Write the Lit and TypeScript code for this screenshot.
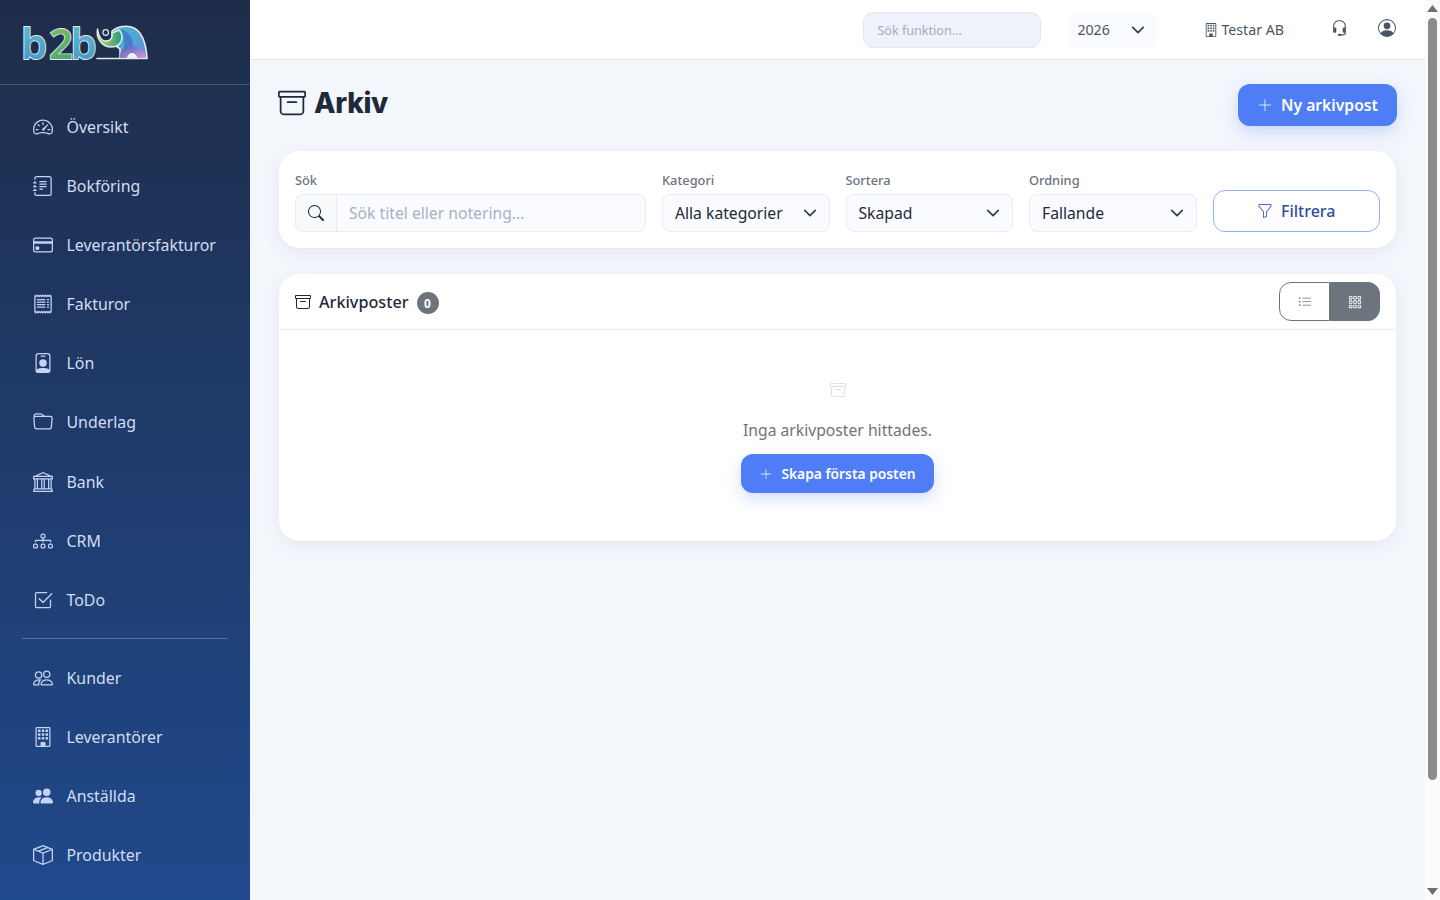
import { LitElement, html, css, svg } from "lit";
import { customElement } from "lit/decorators.js";

const ICONS: Record<string, any> = {
  speedometer: svg`<path d="M8 4a.5.5 0 0 1 .5.5V6a.5.5 0 0 1-1 0V4.5A.5.5 0 0 1 8 4M3.732 5.732a.5.5 0 0 1 .707 0l.915.914a.5.5 0 1 1-.708.708l-.914-.915a.5.5 0 0 1 0-.707M2 10a.5.5 0 0 1 .5-.5h1.586a.5.5 0 0 1 0 1H2.5A.5.5 0 0 1 2 10m9.5 0a.5.5 0 0 1 .5-.5h1.5a.5.5 0 0 1 0 1H12a.5.5 0 0 1-.5-.5m.754-4.246a.39.39 0 0 0-.527-.02L7.547 9.31a.91.91 0 1 0 1.302 1.258l3.434-4.297a.39.39 0 0 0-.029-.518z"/><path fill-rule="evenodd" d="M0 10a8 8 0 1 1 15.547 2.661c-.442 1.253-1.845 1.602-2.932 1.25C11.309 13.488 9.475 13 8 13c-1.474 0-3.31.488-4.615.911-1.087.352-2.49.003-2.932-1.25A8 8 0 0 1 0 10m8-7a7 7 0 0 0-6.603 9.329c.203.575.923.876 1.68.63C4.397 12.533 6.358 12 8 12s3.604.532 4.923.96c.757.245 1.477-.056 1.68-.631A7 7 0 0 0 8 3"/>`,
  journal: svg`<path d="M5 10.5a.5.5 0 0 1 .5-.5h2a.5.5 0 0 1 0 1h-2a.5.5 0 0 1-.5-.5m0-2a.5.5 0 0 1 .5-.5h5a.5.5 0 0 1 0 1h-5a.5.5 0 0 1-.5-.5m0-2a.5.5 0 0 1 .5-.5h5a.5.5 0 0 1 0 1h-5a.5.5 0 0 1-.5-.5m0-2a.5.5 0 0 1 .5-.5h5a.5.5 0 0 1 0 1h-5a.5.5 0 0 1-.5-.5"/><path d="M3 0h10a2 2 0 0 1 2 2v12a2 2 0 0 1-2 2H3a2 2 0 0 1-2-2v-1h1v1a1 1 0 0 0 1 1h10a1 1 0 0 0 1-1V2a1 1 0 0 0-1-1H3a1 1 0 0 0-1 1v1H1V2a2 2 0 0 1 2-2"/><path d="M1 5v-.5a.5.5 0 0 1 1 0V5h.5a.5.5 0 0 1 0 1h-2a.5.5 0 0 1 0-1zm0 3v-.5a.5.5 0 0 1 1 0V8h.5a.5.5 0 0 1 0 1h-2a.5.5 0 0 1 0-1zm0 3v-.5a.5.5 0 0 1 1 0v.5h.5a.5.5 0 0 1 0 1h-2a.5.5 0 0 1 0-1z"/>`,
  card: svg`<path d="M0 4a2 2 0 0 1 2-2h12a2 2 0 0 1 2 2v8a2 2 0 0 1-2 2H2a2 2 0 0 1-2-2zm2-1a1 1 0 0 0-1 1v1h14V4a1 1 0 0 0-1-1zm13 4H1v5a1 1 0 0 0 1 1h12a1 1 0 0 0 1-1z"/><path d="M2 10a1 1 0 0 1 1-1h1a1 1 0 0 1 1 1v1a1 1 0 0 1-1 1H3a1 1 0 0 1-1-1z"/>`,
  receipt: svg`<path d="M1.92.506a.5.5 0 0 1 .434.14L3 1.293l.646-.647a.5.5 0 0 1 .708 0L5 1.293l.646-.647a.5.5 0 0 1 .708 0L7 1.293l.646-.647a.5.5 0 0 1 .708 0L9 1.293l.646-.647a.5.5 0 0 1 .708 0l.646.647.646-.647a.5.5 0 0 1 .708 0l.646.647.646-.647a.5.5 0 0 1 .801.13l.5 1A.5.5 0 0 1 15 2v12a.5.5 0 0 1-.053.224l-.5 1a.5.5 0 0 1-.8.13L13 14.707l-.646.647a.5.5 0 0 1-.708 0L11 14.707l-.646.647a.5.5 0 0 1-.708 0L9 14.707l-.646.647a.5.5 0 0 1-.708 0L7 14.707l-.646.647a.5.5 0 0 1-.708 0L5 14.707l-.646.647a.5.5 0 0 1-.708 0L3 14.707l-.646.647a.5.5 0 0 1-.801-.13l-.5-1A.5.5 0 0 1 1 14V2a.5.5 0 0 1 .053-.224l.5-1a.5.5 0 0 1 .367-.27m.217 1.338L2 2.118v11.764l.137.274.51-.51a.5.5 0 0 1 .707 0l.646.647.646-.646a.5.5 0 0 1 .708 0l.646.646.646-.646a.5.5 0 0 1 .708 0l.646.646.646-.646a.5.5 0 0 1 .708 0l.646.646.646-.646a.5.5 0 0 1 .708 0l.646.646.646-.646a.5.5 0 0 1 .708 0l.509.509.137-.274V2.118l-.137-.274-.51.51a.5.5 0 0 1-.707 0L12 1.707l-.646.647a.5.5 0 0 1-.708 0L10 1.707l-.646.647a.5.5 0 0 1-.708 0L8 1.707l-.646.647a.5.5 0 0 1-.708 0L6 1.707l-.646.647a.5.5 0 0 1-.708 0L4 1.707l-.646.647a.5.5 0 0 1-.708 0z"/><path d="M3 4.5a.5.5 0 0 1 .5-.5h6a.5.5 0 1 1 0 1h-6a.5.5 0 0 1-.5-.5m0 2a.5.5 0 0 1 .5-.5h6a.5.5 0 1 1 0 1h-6a.5.5 0 0 1-.5-.5m0 2a.5.5 0 0 1 .5-.5h6a.5.5 0 1 1 0 1h-6a.5.5 0 0 1-.5-.5m0 2a.5.5 0 0 1 .5-.5h6a.5.5 0 0 1 0 1h-6a.5.5 0 0 1-.5-.5m8-6a.5.5 0 0 1 .5-.5h1a.5.5 0 0 1 0 1h-1a.5.5 0 0 1-.5-.5m0 2a.5.5 0 0 1 .5-.5h1a.5.5 0 0 1 0 1h-1a.5.5 0 0 1-.5-.5m0 2a.5.5 0 0 1 .5-.5h1a.5.5 0 0 1 0 1h-1a.5.5 0 0 1-.5-.5m0 2a.5.5 0 0 1 .5-.5h1a.5.5 0 0 1 0 1h-1a.5.5 0 0 1-.5-.5"/>`,
  badge: svg`<path d="M6.5 2a.5.5 0 0 0 0 1h3a.5.5 0 0 0 0-1zM11 8a3 3 0 1 1-6 0 3 3 0 0 1 6 0"/><path d="M4.5 0A2.5 2.5 0 0 0 2 2.5V14a2 2 0 0 0 2 2h8a2 2 0 0 0 2-2V2.5A2.5 2.5 0 0 0 11.5 0zM3 2.5A1.5 1.5 0 0 1 4.5 1h7A1.5 1.5 0 0 1 13 2.5v10.795a4.2 4.2 0 0 0-.776-.492C11.392 12.387 10.063 12 8 12s-3.392.387-4.224.803a4.2 4.2 0 0 0-.776.492z"/>`,
  folder: svg`<path d="M.54 3.87.5 3a2 2 0 0 1 2-2h3.672a2 2 0 0 1 1.414.586l.828.828A2 2 0 0 0 9.828 3h3.982a2 2 0 0 1 1.992 2.181l-.637 7A2 2 0 0 1 13.174 14H2.826a2 2 0 0 1-1.991-1.819l-.637-7a2 2 0 0 1 .342-1.31zM2.19 4a1 1 0 0 0-.996 1.09l.637 7a1 1 0 0 0 .995.91h10.348a1 1 0 0 0 .995-.91l.637-7A1 1 0 0 0 13.81 4zm4.69-1.707A1 1 0 0 0 6.172 2H2.5a1 1 0 0 0-1 .981l.006.139q.323-.119.684-.12h5.396z"/>`,
  bank: svg`<path d="m8 0 6.61 3h.89a.5.5 0 0 1 .5.5v2a.5.5 0 0 1-.5.5H15v7a.5.5 0 0 1 .485.38l.5 2a.498.498 0 0 1-.485.62H.5a.498.498 0 0 1-.485-.62l.5-2A.5.5 0 0 1 1 13V6H.5a.5.5 0 0 1-.5-.5v-2A.5.5 0 0 1 .5 3h.89zM3.777 3h8.447L8 1zM2 6v7h1V6zm2 0v7h2.5V6zm3.5 0v7h1V6zm2 0v7H12V6zM13 6v7h1V6zm2-1V4H1v1zm-.39 9H1.39l-.25 1h13.72z"/>`,
  diagram: svg`<path fill-rule="evenodd" d="M6 3.5A1.5 1.5 0 0 1 7.5 2h1A1.5 1.5 0 0 1 10 3.5v1A1.5 1.5 0 0 1 8.5 6v1H14a.5.5 0 0 1 .5.5v1a.5.5 0 0 1-1 0V8h-5v.5a.5.5 0 0 1-1 0V8h-5v.5a.5.5 0 0 1-1 0v-1A.5.5 0 0 1 2 7h5.5V6A1.5 1.5 0 0 1 6 4.5zM8.5 5a.5.5 0 0 0 .5-.5v-1a.5.5 0 0 0-.5-.5h-1a.5.5 0 0 0-.5.5v1a.5.5 0 0 0 .5.5zM0 11.5A1.5 1.5 0 0 1 1.5 10h1A1.5 1.5 0 0 1 4 11.5v1A1.5 1.5 0 0 1 2.5 14h-1A1.5 1.5 0 0 1 0 12.5zm1.5-.5a.5.5 0 0 0-.5.5v1a.5.5 0 0 0 .5.5h1a.5.5 0 0 0 .5-.5v-1a.5.5 0 0 0-.5-.5zm4.5.5A1.5 1.5 0 0 1 7.5 10h1a1.5 1.5 0 0 1 1.5 1.5v1A1.5 1.5 0 0 1 8.5 14h-1A1.5 1.5 0 0 1 6 12.5zm1.5-.5a.5.5 0 0 0-.5.5v1a.5.5 0 0 0 .5.5h1a.5.5 0 0 0 .5-.5v-1a.5.5 0 0 0-.5-.5zm4.5.5a1.5 1.5 0 0 1 1.5-1.5h1a1.5 1.5 0 0 1 1.5 1.5v1a1.5 1.5 0 0 1-1.5 1.5h-1a1.5 1.5 0 0 1-1.5-1.5zm1.5-.5a.5.5 0 0 0-.5.5v1a.5.5 0 0 0 .5.5h1a.5.5 0 0 0 .5-.5v-1a.5.5 0 0 0-.5-.5z"/>`,
  check: svg`<path d="M3 14.5A1.5 1.5 0 0 1 1.5 13V3A1.5 1.5 0 0 1 3 1.5h8a.5.5 0 0 1 0 1H3a.5.5 0 0 0-.5.5v10a.5.5 0 0 0 .5.5h10a.5.5 0 0 0 .5-.5V8a.5.5 0 0 1 1 0v5a1.5 1.5 0 0 1-1.5 1.5z"/><path d="m8.354 10.354 7-7a.5.5 0 0 0-.708-.708L8 9.293 5.354 6.646a.5.5 0 1 0-.708.708l3 3a.5.5 0 0 0 .708 0"/>`,
  people: svg`<path d="M15 14s1 0 1-1-1-4-5-4-5 3-5 4 1 1 1 1zm-7.978-1L7 12.996c.001-.264.167-1.03.76-1.72C8.312 10.629 9.282 10 11 10c1.717 0 2.687.63 3.24 1.276.593.69.758 1.457.76 1.72l-.008.002-.014.002zM11 7a2 2 0 1 0 0-4 2 2 0 0 0 0 4m3-2a3 3 0 1 1-6 0 3 3 0 0 1 6 0M6.936 9.28a6 6 0 0 0-1.23-.247A7 7 0 0 0 5 9c-4 0-5 3-5 4q0 1 1 1h4.216A2.24 2.24 0 0 1 5 13c0-1.01.377-2.042 1.09-2.904.243-.294.526-.569.846-.816M4.92 10A5.5 5.5 0 0 0 4 13H1c0-.26.164-1.03.76-1.724.545-.636 1.492-1.256 3.16-1.275ZM1.5 5.5a3 3 0 1 1 6 0 3 3 0 0 1-6 0m3-2a2 2 0 1 0 0 4 2 2 0 0 0 0-4"/>`,
  building: svg`<path d="M4 2.5a.5.5 0 0 1 .5-.5h1a.5.5 0 0 1 .5.5v1a.5.5 0 0 1-.5.5h-1a.5.5 0 0 1-.5-.5zm3 0a.5.5 0 0 1 .5-.5h1a.5.5 0 0 1 .5.5v1a.5.5 0 0 1-.5.5h-1a.5.5 0 0 1-.5-.5zm3.5-.5a.5.5 0 0 0-.5.5v1a.5.5 0 0 0 .5.5h1a.5.5 0 0 0 .5-.5v-1a.5.5 0 0 0-.5-.5zM4 5.5a.5.5 0 0 1 .5-.5h1a.5.5 0 0 1 .5.5v1a.5.5 0 0 1-.5.5h-1a.5.5 0 0 1-.5-.5zM7.5 5a.5.5 0 0 0-.5.5v1a.5.5 0 0 0 .5.5h1a.5.5 0 0 0 .5-.5v-1a.5.5 0 0 0-.5-.5zm2.5.5a.5.5 0 0 1 .5-.5h1a.5.5 0 0 1 .5.5v1a.5.5 0 0 1-.5.5h-1a.5.5 0 0 1-.5-.5zM4.5 8a.5.5 0 0 0-.5.5v1a.5.5 0 0 0 .5.5h1a.5.5 0 0 0 .5-.5v-1a.5.5 0 0 0-.5-.5zm2.5.5a.5.5 0 0 1 .5-.5h1a.5.5 0 0 1 .5.5v1a.5.5 0 0 1-.5.5h-1a.5.5 0 0 1-.5-.5zm3.5-.5a.5.5 0 0 0-.5.5v1a.5.5 0 0 0 .5.5h1a.5.5 0 0 0 .5-.5v-1a.5.5 0 0 0-.5-.5z"/><path d="M2 1a1 1 0 0 1 1-1h10a1 1 0 0 1 1 1v14a1 1 0 0 1-1 1H3a1 1 0 0 1-1-1zm11 0H3v14h3v-2.5a.5.5 0 0 1 .5-.5h3a.5.5 0 0 1 .5.5V15h3z"/>`,
  peopleFill: svg`<path d="M7 14s-1 0-1-1 1-4 5-4 5 3 5 4-1 1-1 1zm4-6a3 3 0 1 0 0-6 3 3 0 0 0 0 6m-5.784 6A2.24 2.24 0 0 1 5 13c0-1.355.68-2.75 1.936-3.72A6.3 6.3 0 0 0 5 9c-4 0-5 3-5 4s1 1 1 1zM4.5 8a2.5 2.5 0 1 0 0-5 2.5 2.5 0 0 0 0 5"/>`,
  box: svg`<path d="M8.186 1.113a.5.5 0 0 0-.372 0L1.846 3.5l2.404.961L10.404 2zm3.564 1.426L5.596 5 8 5.961 14.154 3.5zm3.25 1.7-6.5 2.6v7.922l6.5-2.6V4.24zM7.5 14.762V6.838L1 4.239v7.925zM7.443.184a1.5 1.5 0 0 1 1.114 0l7.129 2.852A.5.5 0 0 1 16 3.5v8.662a1 1 0 0 1-.629.928l-7.185 2.874a.5.5 0 0 1-.372 0L.63 13.09a1 1 0 0 1-.63-.928V3.5a.5.5 0 0 1 .314-.464z"/>`,
  archive: svg`<path d="M0 2a1 1 0 0 1 1-1h14a1 1 0 0 1 1 1v2a1 1 0 0 1-1 1v7.5a2.5 2.5 0 0 1-2.5 2.5h-9A2.5 2.5 0 0 1 1 12.5V5a1 1 0 0 1-1-1zm2 3v7.5A1.5 1.5 0 0 0 3.5 14h9a1.5 1.5 0 0 0 1.5-1.5V5zm13-3H1v2h14zM5 7.5a.5.5 0 0 1 .5-.5h5a.5.5 0 0 1 0 1h-5a.5.5 0 0 1-.5-.5"/>`,
  search: svg`<path d="M11.742 10.344a6.5 6.5 0 1 0-1.397 1.398h-.001q.044.06.098.115l3.85 3.85a1 1 0 0 0 1.415-1.414l-3.85-3.85a1 1 0 0 0-.115-.1zM12 6.5a5.5 5.5 0 1 1-11 0 5.5 5.5 0 0 1 11 0"/>`,
  funnel: svg`<path d="M1.5 1.5A.5.5 0 0 1 2 1h12a.5.5 0 0 1 .5.5v2a.5.5 0 0 1-.128.334L10 8.692V13.5a.5.5 0 0 1-.342.474l-3 1A.5.5 0 0 1 6 14.5V8.692L1.628 3.834A.5.5 0 0 1 1.5 3.5zm1 .5v1.308l4.372 4.858A.5.5 0 0 1 7 8.5v5.306l2-.666V8.5a.5.5 0 0 1 .128-.334L13.5 3.308V2z"/>`,
  plus: svg`<path fill-rule="evenodd" d="M8 2a.5.5 0 0 1 .5.5v5h5a.5.5 0 0 1 0 1h-5v5a.5.5 0 0 1-1 0v-5h-5a.5.5 0 0 1 0-1h5v-5A.5.5 0 0 1 8 2"/>`,
  list: svg`<path fill-rule="evenodd" d="M5 11.5a.5.5 0 0 1 .5-.5h9a.5.5 0 0 1 0 1h-9a.5.5 0 0 1-.5-.5m0-4a.5.5 0 0 1 .5-.5h9a.5.5 0 0 1 0 1h-9a.5.5 0 0 1-.5-.5m0-4a.5.5 0 0 1 .5-.5h9a.5.5 0 0 1 0 1h-9a.5.5 0 0 1-.5-.5m-3 1a1 1 0 1 0 0-2 1 1 0 0 0 0 2m0 4a1 1 0 1 0 0-2 1 1 0 0 0 0 2m0 4a1 1 0 1 0 0-2 1 1 0 0 0 0 2"/>`,
  grid: svg`<path d="M4 2v2H2V2zm1 12v-2a1 1 0 0 0-1-1H2a1 1 0 0 0-1 1v2a1 1 0 0 0 1 1h2a1 1 0 0 0 1-1m0-5V7a1 1 0 0 0-1-1H2a1 1 0 0 0-1 1v2a1 1 0 0 0 1 1h2a1 1 0 0 0 1-1m0-5V2a1 1 0 0 0-1-1H2a1 1 0 0 0-1 1v2a1 1 0 0 0 1 1h2a1 1 0 0 0 1-1m5 10v-2a1 1 0 0 0-1-1H7a1 1 0 0 0-1 1v2a1 1 0 0 0 1 1h2a1 1 0 0 0 1-1m0-5V7a1 1 0 0 0-1-1H7a1 1 0 0 0-1 1v2a1 1 0 0 0 1 1h2a1 1 0 0 0 1-1m0-5V2a1 1 0 0 0-1-1H7a1 1 0 0 0-1 1v2a1 1 0 0 0 1 1h2a1 1 0 0 0 1-1M9 2v2H7V2zm5 0v2h-2V2zM4 7v2H2V7zm5 0v2H7V7zm5 0h-2v2h2zM4 12v2H2v-2zm5 0v2H7v-2zm5 0v2h-2v-2zM12 1a1 1 0 0 0-1 1v2a1 1 0 0 0 1 1h2a1 1 0 0 0 1-1V2a1 1 0 0 0-1-1zm-1 6a1 1 0 0 1 1-1h2a1 1 0 0 1 1 1v2a1 1 0 0 1-1 1h-2a1 1 0 0 1-1-1zm1 4a1 1 0 0 0-1 1v2a1 1 0 0 0 1 1h2a1 1 0 0 0 1-1v-2a1 1 0 0 0-1-1z"/>`,
  headset: svg`<path d="M8 1a5 5 0 0 0-5 5v1h1a1 1 0 0 1 1 1v3a1 1 0 0 1-1 1H3a1 1 0 0 1-1-1V6a6 6 0 1 1 12 0v6a2.5 2.5 0 0 1-2.5 2.5H9.366a1 1 0 0 1-.866.5h-1a1 1 0 1 1 0-2h1a1 1 0 0 1 .866.5H11.5A1.5 1.5 0 0 0 13 12h-1a1 1 0 0 1-1-1V8a1 1 0 0 1 1-1h1V6a5 5 0 0 0-5-5"/>`,
  person: svg`<path d="M11 6a3 3 0 1 1-6 0 3 3 0 0 1 6 0"/><path fill-rule="evenodd" d="M0 8a8 8 0 1 1 16 0A8 8 0 0 1 0 8m8-7a7 7 0 0 0-5.468 11.37C3.242 11.226 4.805 10 8 10s4.757 1.225 5.468 2.37A7 7 0 0 0 8 1"/>`,
};

const icon = (name: string, cls = "") =>
  html`<svg class="ic ${cls}" viewBox="0 0 16 16" fill="currentColor" aria-hidden="true">${ICONS[name]}</svg>`;

const chevron = html`<svg class="chev" viewBox="0 0 16 16" fill="none" stroke="currentColor" stroke-width="2" stroke-linecap="round" stroke-linejoin="round" aria-hidden="true"><path d="m2 5 6 6 6-6"/></svg>`;

const logo = html`<svg class="logo" viewBox="20 20 130 46" aria-label="b2b">
  <defs>
    <linearGradient id="lb" x1="0" y1="0" x2="0" y2="1"><stop offset="0" stop-color="#62c1d8"/><stop offset="1" stop-color="#3f95c2"/></linearGradient>
    <linearGradient id="lg" x1="0" y1="0" x2="1" y2="1"><stop offset="0" stop-color="#a8cf5c"/><stop offset="1" stop-color="#1f9a72"/></linearGradient>
    <linearGradient id="lt" x1="0" y1="0" x2="1" y2="0"><stop offset="0" stop-color="#d4d866"/><stop offset="1" stop-color="#1e9a80"/></linearGradient>
    <linearGradient id="lc" x1="0" y1="0" x2="1" y2="1"><stop offset="0" stop-color="#45bcd0"/><stop offset="1" stop-color="#5f8fd8"/></linearGradient>
    <linearGradient id="lp" x1="0" y1="0" x2="1" y2="1"><stop offset="0" stop-color="#4863bd"/><stop offset="1" stop-color="#d69ad8"/></linearGradient>
  </defs>
  <text class="logo-t" y="60" stroke="#e4e9ec" stroke-width="1.800" paint-order="stroke"><tspan x="21" fill="url(#lb)">b</tspan><tspan x="49" fill="url(#lg)">2</tspan><tspan x="70.500" fill="url(#lb)">b</tspan></text>
  <path d="M97 59.500h50" stroke="#e6e8e6" stroke-width="1.600" stroke-linecap="round"/>
  <path d="M112 32c6-5 16-6 22-3 8 4 12 16 13 30H120V50l-8-6z" fill="url(#lc)" stroke="#e4e9ec" stroke-width="1.600" stroke-linejoin="round"/>
  <path d="M121 30c7 2 13 9 12 19h-9c1-7-1-14-3-19z" fill="#3f6fcb" opacity=".75"/>
  <path d="M120 59c-1-7 4-12 12-12s13.500 5 14 12z" fill="url(#lp)"/>
  <path d="M127 59c.500-3 2.500-5 5-5s5 2 5.500 5z" fill="#eef0f2"/>
  <path d="M97.500 30c-2 10 5 18 14 18 6 0 10.500-4 10.500-10 0-3-1-5-3-7l-7 3c1 4-1 8-6 8-5 0-7.500-6-8.500-12z" fill="url(#lt)" stroke="#e4e9ec" stroke-width="1.400" stroke-linejoin="round"/>
  <circle cx="105.700" cy="33.500" r="2.800" fill="#1e2f4d" stroke="#e4e9ec" stroke-width="1.200"/>
</svg>`;

const NAV_A = [
  ["speedometer", "Översikt"], ["journal", "Bokföring"], ["card", "Leverantörsfakturor"],
  ["receipt", "Fakturor"], ["badge", "Lön"], ["folder", "Underlag"], ["bank", "Bank"],
  ["diagram", "CRM"], ["check", "ToDo"],
];
const NAV_B = [
  ["people", "Kunder"], ["building", "Leverantörer"], ["peopleFill", "Anställda"], ["box", "Produkter"],
];

@customElement("app-root")
export class AppRoot extends LitElement {
  static styles = css`
    :host {
      display: flex;
      height: 100vh;
      overflow: hidden;
      font-family: "Noto Sans", "Open Sans", sans-serif;
      background: #f3f6fb;
      color: #1e293b;
    }
    * { box-sizing: border-box; }
    .ic { display: block; flex: none; width: 16px; height: 16px; }
    .chev { display: block; flex: none; width: 14px; height: 14px; color: #374151; }

    .side {
      flex: none;
      width: 250px;
      height: 100%;
      overflow: hidden;
      display: flex;
      flex-direction: column;
      background: linear-gradient(180deg, #1e2d4a 0%, #20498c 100%);
    }
    .brand {
      flex: none;
      height: 85px;
      display: flex;
      align-items: center;
      padding-left: 20px;
      border-bottom: 1px solid rgba(255, 255, 255, 0.18);
    }
    .logo { display: block; width: 130px; height: 46px; margin-top: -1px; overflow: visible; }
    .logo-t { font-family: "Noto Sans", sans-serif; font-weight: 600; font-size: 42px; }
    .nav { padding-top: 12.450px; display: flex; flex-direction: column; }
    .nav-item {
      flex: none;
      height: 59.100px;
      display: flex;
      align-items: center;
      gap: 14px;
      padding-left: 32.500px;
      color: #d2ddf2;
      font-size: 15.900px;
    }
    .nav-item .ic { width: 20px; height: 20px; color: #c3d3f5; }
    .nav-rule { flex: none; height: 1px; margin: 9px 22px; background: rgba(255, 255, 255, 0.25); }

    .main { flex: 1; min-width: 0; display: flex; flex-direction: column; }
    .top {
      flex: none;
      height: 60px;
      background: #fff;
      border-bottom: 1px solid #e2e6ee;
      display: flex;
      align-items: center;
      justify-content: flex-end;
      padding-right: 29px;
    }
    .top-search {
      width: 178px;
      height: 36px;
      border: 1px solid #e3e7f1;
      border-radius: 10px;
      background: #eff2fa;
      color: #a4acc2;
      font-size: 12.600px;
      display: flex;
      align-items: center;
      padding: 1px 0 0 13px;
    }
    .top-year {
      margin-left: 28px;
      width: 88px;
      height: 36px;
      border-radius: 8px;
      background: #fafbfe;
      display: flex;
      align-items: center;
      justify-content: space-between;
      padding: 0 12px 0 8px;
      font-size: 14.200px;
      line-height: 20px;
      color: #4b5563;
    }
    .company {
      margin-left: 46.500px;
      display: flex;
      align-items: center;
      gap: 3.500px;
      font-size: 14.200px;
      line-height: 20px;
      color: #4b5563;
    }
    .company .ic { width: 14px; height: 14px; }
    .headset { margin-left: 47px; width: 17px; height: 17px; color: #4b5563; margin-top: -3px; }
    .person { margin-left: 30px; width: 18px; height: 18px; color: #4b5563; margin-top: -3px; }

    .page { flex: 1; padding: 24px 29px; display: flex; flex-direction: column; }
    .head {
      display: flex;
      align-items: flex-start;
      justify-content: space-between;
      height: 42px;
      margin: 0 -1px 25px -1px;
    }
    .title {
      margin: 0;
      display: flex;
      align-items: center;
      gap: 8px;
      height: 37px;
      font-family: Inter, "Noto Sans", sans-serif;
      font-weight: 800;
      font-size: 28px;
      letter-spacing: -0.300px;
      color: #1e293b;
    }
    .title .ic { width: 28px; height: 28px; }
    .btn {
      border: 0;
      background: #4f7df5;
      color: #fff;
      font-family: inherit;
      font-weight: 600;
      display: inline-flex;
      align-items: center;
      justify-content: center;
      box-shadow: 0 6px 16px rgba(79, 125, 245, 0.25);
    }
    .btn-lg { width: 159px; height: 42px; border-radius: 12px; font-size: 15.700px; gap: 8px; }
    .btn-lg .ic { width: 16px; height: 16px; color: #dfe8fe; }
    .btn-sm { width: 193px; height: 39px; border-radius: 12px; font-size: 13.800px; gap: 8px; }
    .btn-sm .ic { width: 14px; height: 14px; color: #dfe8fe; }

    .panel {
      background: #fff;
      border: 1px solid #fff;
      border-radius: 20px;
      box-shadow: 0 1px 1px rgba(30, 50, 100, 0.03), 0 4px 18px rgba(30, 50, 100, 0.06);
    }
    .filters {
      display: grid;
      grid-template-columns: repeat(12, minmax(0, 1fr));
      gap: 16px;
      align-items: end;
      padding: 19px 15px 15px;
      height: 97px;
      margin-bottom: 26px;
    }
    .f-4 { grid-column: span 4; }
    .f-2 { grid-column: span 2; }
    .lbl { display: block; font-size: 12.800px; line-height: 18px; margin-bottom: 5px; color: #6b7280; font-weight: 500; }
    .ctl {
      height: 38px;
      border: 1px solid #e8ebf3;
      border-radius: 8px;
      background: #fafbfe;
      font-size: 15.700px;
      display: flex;
      align-items: center;
      color: #1e293b;
    }
    .sel { justify-content: space-between; padding: 0 12px; }
    .group { overflow: hidden; }
    .group-ic {
      flex: none;
      width: 41px;
      height: 100%;
      display: flex;
      align-items: center;
      justify-content: center;
      background: #f8f9fa;
      border-right: 1px solid #e8ebf3;
      color: #1e293b;
    }
    .ph { padding-left: 12px; color: #a8b0c6; }
    .filter-btn {
      height: 42px;
      width: 100%;
      border: 1px solid #93b1f8;
      border-radius: 12px;
      background: #fff;
      color: #2f4f9e;
      font-family: inherit;
      font-size: 16px;
      font-weight: 500;
      display: flex;
      align-items: center;
      justify-content: center;
      gap: 8px;
    }
    .filter-btn .ic { color: #4a6fd0; }

    .list-head {
      height: 55px;
      border-bottom: 1px solid #e6e9f1;
      display: flex;
      align-items: center;
      padding: 0 15px;
    }
    .list-title { display: flex; align-items: center; gap: 8px; font-size: 16.200px; font-weight: 500; color: #1e293b; }
    .count {
      width: 22px;
      height: 22px;
      margin-top: 2px;
      border-radius: 50%;
      background: #6c757d;
      color: #fff;
      font-size: 12px;
      font-weight: 700;
      display: flex;
      align-items: center;
      justify-content: center;
    }
    .toggle { margin-left: auto; display: flex; height: 39px; width: 101px; margin-top: -1px; }
    .tg {
      display: flex;
      align-items: center;
      justify-content: center;
      border: 1px solid #6c757d;
    }
    .tg .ic { width: 14px; height: 14px; }
    .tg-a { width: 51px; border-radius: 12px 0 0 12px; background: #fff; color: #6c757d; }
    .tg-b { width: 50px; border-radius: 0 12px 12px 0; background: #6c757d; color: #fff; }
    .empty {
      height: 210px;
      display: flex;
      flex-direction: column;
      align-items: center;
      padding-top: 52px;
    }
    .empty .ic { color: #dfe2e7; }
    .empty p { margin: 20px 0 12px; font-size: 15.700px; line-height: 24px; color: #6c757d; }

    .scroll {
      flex: none;
      width: 15px;
      height: 100%;
      background: #fbfbfb;
      display: flex;
      flex-direction: column;
      align-items: center;
    }
    .arrow { display: block; flex: none; width: 11px; height: 7px; fill: #6e6e6e; }
    .arrow-up { margin-top: 5px; }
    .arrow-down { margin-bottom: 5px; }
    .thumb { flex: none; width: 9px; height: 762px; margin-top: 6px; border-radius: 5px; background: #8b8b8b; }
    .track-fill { flex: 1; }
  `;

  render() {
    const row = ([ic, label]: string[]) => html`<div class="nav-item">${icon(ic)}<span>${label}</span></div>`;
    return html`
      <aside class="side">
        <div class="brand">${logo}</div>
        <nav class="nav">
          ${NAV_A.map(row)}
          <div class="nav-rule"></div>
          ${NAV_B.map(row)}
        </nav>
      </aside>
      <div class="main">
        <header class="top">
          <div class="top-search">Sök funktion...</div>
          <div class="top-year"><span>2026</span>${chevron}</div>
          <div class="company">${icon("building")}<span>Testar AB</span></div>
          ${icon("headset", "headset")}
          ${icon("person", "person")}
        </header>
        <main class="page">
          <div class="head">
            <h1 class="title">${icon("archive")}<span>Arkiv</span></h1>
            <button class="btn btn-lg">${icon("plus")}<span>Ny arkivpost</span></button>
          </div>
          <section class="panel filters">
            <div class="f-4">
              <span class="lbl">Sök</span>
              <div class="ctl group"><span class="group-ic">${icon("search")}</span><span class="ph">Sök titel eller notering...</span></div>
            </div>
            <div class="f-2"><span class="lbl">Kategori</span><div class="ctl sel"><span>Alla kategorier</span>${chevron}</div></div>
            <div class="f-2"><span class="lbl">Sortera</span><div class="ctl sel"><span>Skapad</span>${chevron}</div></div>
            <div class="f-2"><span class="lbl">Ordning</span><div class="ctl sel"><span>Fallande</span>${chevron}</div></div>
            <div class="f-2"><button class="filter-btn">${icon("funnel")}<span>Filtrera</span></button></div>
          </section>
          <section class="panel">
            <div class="list-head">
              <div class="list-title">${icon("archive")}<span>Arkivposter</span><span class="count">0</span></div>
              <div class="toggle">
                <div class="tg tg-a">${icon("list")}</div>
                <div class="tg tg-b">${icon("grid")}</div>
              </div>
            </div>
            <div class="empty">
              ${icon("archive")}
              <p>Inga arkivposter hittades.</p>
              <button class="btn btn-sm">${icon("plus")}<span>Skapa första posten</span></button>
            </div>
          </section>
        </main>
      </div>
      <div class="scroll" aria-hidden="true">
        <svg class="arrow arrow-up" viewBox="0 0 11 7"><path d="M5.500 0 11 7H0z"/></svg>
        <div class="thumb"></div>
        <div class="track-fill"></div>
        <svg class="arrow arrow-down" viewBox="0 0 11 7"><path d="M0 0h11L5.500 7z"/></svg>
      </div>
    `;
  }
}
